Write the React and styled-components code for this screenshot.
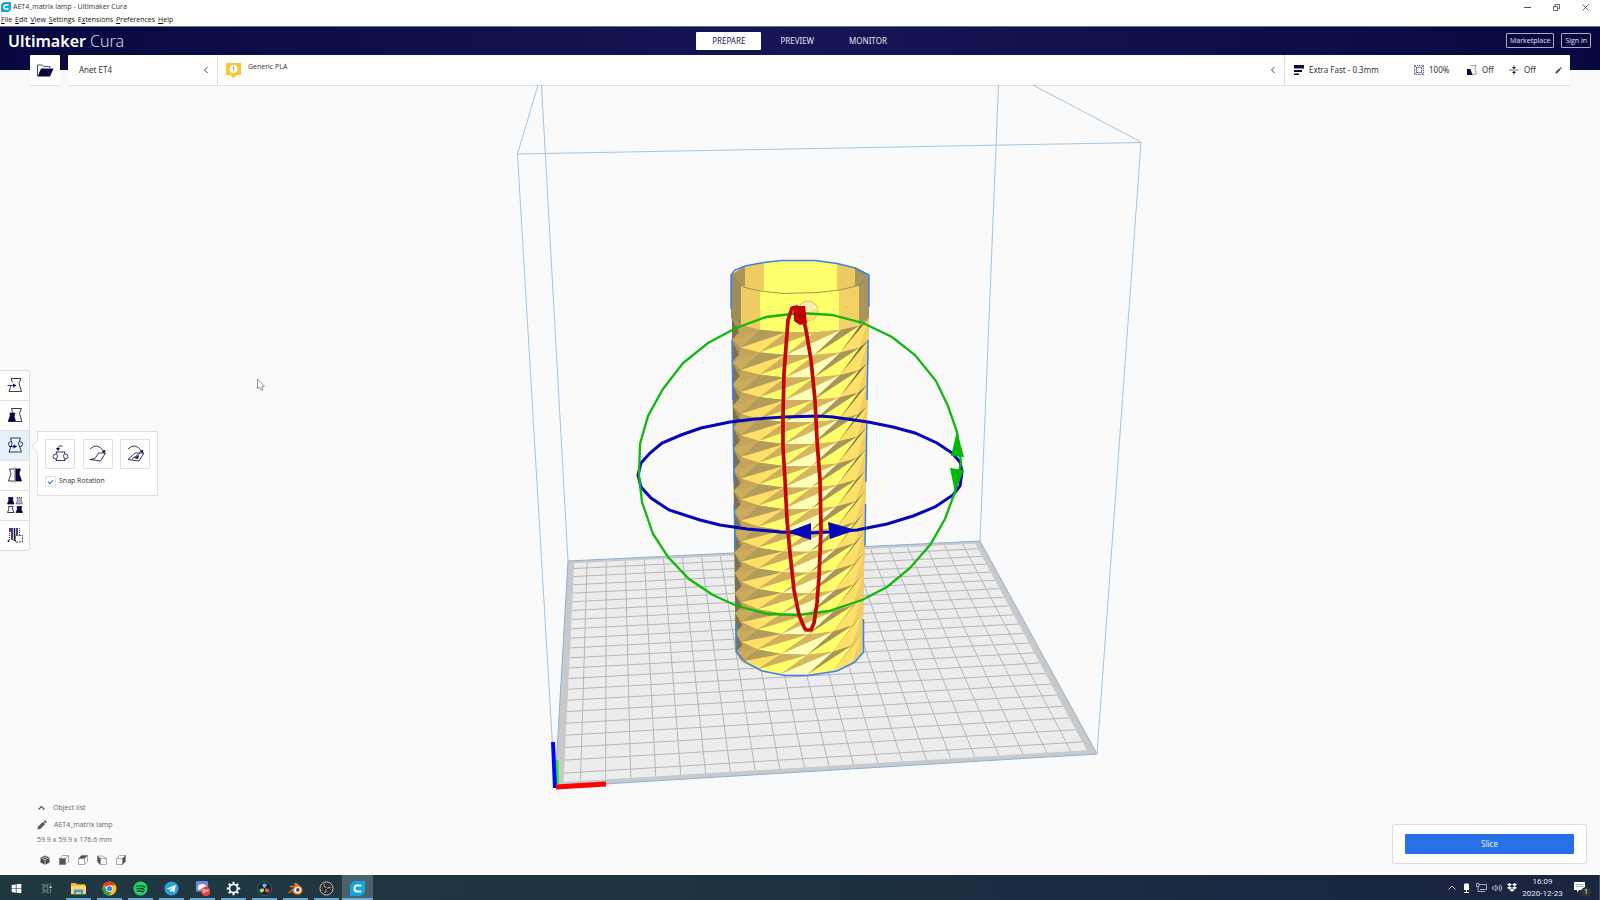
import React from "react";
import styled, { createGlobalStyle, css } from "styled-components";

const Global = createGlobalStyle`
  *, *::before, *::after { box-sizing: border-box; }
  body { margin: 0; background: #fafafa; }
  button, input { font: inherit; color: inherit; }
  button { margin: 0; padding: 0; border: 0; background: none; cursor: pointer; }
  svg { display: block; flex: none; }
`;

const navy = "#08073f";
const labelFont = `"Noto Sans", "Open Sans", sans-serif`;

const Page = styled.div`
  min-height: 100vh;
  display: flex;
  flex-direction: column;
  font-family: "Open Sans", "Noto Sans", sans-serif;
  font-size: 7px;
  line-height: 10px;
  color: #333;
`;

/* ---------- window frame ---------- */
const TitleBar = styled.div`
  height: 14px;
  display: flex;
  align-items: center;
  gap: 2px;
  padding-left: 1px;
  background: #fff;
`;
const WindowButtons = styled.div`
  margin-left: auto;
  display: flex;
`;
const WindowButton = styled.button`
  width: 29px;
  height: 14px;
  display: grid;
  place-items: center;
`;
const MenuBar = styled.nav`
  height: 12px;
  display: flex;
  align-items: center;
  gap: 3px;
  padding-left: 1px;
  background: #fff;
  color: #111;
`;

/* ---------- header ---------- */
const Header = styled.header`
  height: 44px;
  padding: 0 9px 16px 8px;
  display: grid;
  grid-template-columns: 1fr auto 1fr;
  align-items: center;
  background: linear-gradient(90deg, ${navy}, #161655 50%, ${navy});
  border-top: 1px solid #6f6f93;
`;
const Logo = styled.div`
  font-family: ${labelFont};
  font-size: 16px;
  line-height: 20px;
  font-weight: 300;
  color: #d8d8e6;
  b { font-weight: 600; color: #fff; }
`;
const Tabs = styled.nav`
  display: flex;
  gap: 3px;
`;
const Tab = styled.button`
  height: 18px;
  padding: 0 16px;
  border-radius: 1px;
  font-family: ${labelFont};
  font-size: 8px;
  line-height: 18px;
  color: ${(p) => (p.$active ? "#161655" : "#e3e3f0")};
  background: ${(p) => (p.$active ? "#fff" : "transparent")};
`;
const Account = styled.div`
  display: flex;
  justify-content: flex-end;
  gap: 7px;
`;
const OutlineButton = styled.button`
  height: 15px;
  padding: 0 3px;
  border: 1px solid #a9a9c4;
  border-radius: 1px;
  line-height: 13px;
  color: #e3e3f0;
`;

/* ---------- stage bar ---------- */
const Stage = styled.div`
  position: relative;
  z-index: 1;
  display: flex;
  gap: 8px;
  height: 30px;
  margin: -15px 30px 0;
  font-family: ${labelFont};
  font-size: 8px;
`;
const raised = css`
  background: #fff;
  box-shadow: 0 1px 1px #0000001c;
  border-radius: 1px;
`;
const OpenFile = styled.button`
  ${raised}
  width: 30px;
  display: grid;
  place-items: center;
`;
const StageBar = styled.div`
  ${raised}
  flex: 1;
  display: flex;
`;
const Machine = styled.button`
  width: 150px;
  padding: 0 8px 0 11px;
  display: flex;
  align-items: center;
  justify-content: space-between;
  border-right: 1px solid #ddd;
`;
const Material = styled.button`
  flex: 1;
  padding: 0 8px;
  display: flex;
  align-items: center;
  gap: 7px;
  text-align: left;
  > svg:last-child { margin-left: auto; }
`;
const MaterialText = styled.span`
  height: 20px;
  font-family: "Open Sans", sans-serif;
  font-size: 7px;
  line-height: 14px;
`;
const PrintSettings = styled.button`
  width: 286px;
  padding: 0 7px 0 9px;
  display: grid;
  grid-template-columns: 1fr 53px 42px 46px 8px;
  align-items: center;
  border-left: 1px solid #ddd;
`;
const Setting = styled.span`
  display: flex;
  align-items: center;
  gap: 5px;
`;

/* ---------- workspace ---------- */
const Workspace = styled.main`
  position: relative;
  flex: 1;
  display: flex;
  flex-direction: column;
`;
const Viewport = styled.svg`
  position: absolute;
  inset: 0;
  width: 100%;
  height: 100%;
`;
const Middle = styled.div`
  position: relative;
  flex: 1;
  display: flex;
  align-items: center;
  padding-top: 36px;
`;
const Toolbar = styled.div`
  display: flex;
  flex-direction: column;
  background: #fff;
  border: 1px solid #ddd;
  border-left: 0;
  border-radius: 0 3px 3px 0;
`;
const ToolSlot = styled.div`
  position: relative;
  & + & { border-top: 1px solid #e2e2e2; }
`;
const Tool = styled.button`
  width: 29px;
  height: 29px;
  display: grid;
  place-items: center;
  background: ${(p) => (p.$active ? "#e5f0fa" : "transparent")};
`;
const Flyout = styled.div`
  position: absolute;
  left: 37px;
  top: 0;
  width: 121px;
  height: 65px;
  padding: 7px;
  display: flex;
  flex-direction: column;
  gap: 7px;
  background: #fff;
  border: 1px solid #e0e0e0;
  &::before {
    content: "";
    position: absolute;
    left: -5px;
    top: 10px;
    width: 9px;
    height: 9px;
    background: #fff;
    border: solid #e0e0e0;
    border-width: 0 0 1px 1px;
    transform: rotate(45deg);
  }
`;
const FlyoutTools = styled.div`
  display: flex;
  justify-content: space-between;
`;
const FlyoutTool = styled.button`
  width: 30px;
  height: 30px;
  display: grid;
  place-items: center;
  border: 1px solid #e0e0e0;
`;
const CheckLabel = styled.label`
  display: flex;
  align-items: center;
  gap: 3px;
`;
const Check = styled.input`
  appearance: none;
  width: 11px;
  height: 11px;
  margin: 0;
  display: grid;
  place-items: center;
  border: 1px solid #e0e0e0;
  background: #fff;
  &:checked::after {
    content: "";
    width: 5px;
    height: 3px;
    border: solid #2671e7;
    border-width: 0 0 1px 1px;
    transform: rotate(-45deg);
  }
`;
const Bottom = styled.div`
  position: relative;
  display: flex;
  justify-content: space-between;
  align-items: flex-end;
  padding: 0 13px 4px 37px;
`;
const ObjectInfo = styled.section`
  display: flex;
  flex-direction: column;
  color: #666;
`;
const InfoRow = styled.button`
  height: 17px;
  display: flex;
  align-items: center;
  gap: 7px;
`;
const Dimensions = styled.div`
  height: 16px;
  line-height: 14px;
`;
const Views = styled.div`
  height: 22px;
  display: flex;
  align-items: center;
  gap: 9px;
  padding: 0 3px;
`;
const ActionPanel = styled.section`
  width: 195px;
  margin-bottom: 7px;
  padding: 9px 12px;
  background: #fff;
  border: 1px solid #ddd;
  border-radius: 2px;
`;
const SliceButton = styled.button`
  width: 100%;
  height: 20px;
  border-radius: 1px;
  background: #2671e7;
  color: #e8f1fd;
  font-family: ${labelFont};
  font-size: 8px;
`;

/* ---------- taskbar ---------- */
const Taskbar = styled.footer`
  height: 25px;
  padding-left: 1px;
  display: flex;
  color: #e6eaee;
  background: linear-gradient(90deg, #20383f, #1f3640 35%, #1a2741 80%, #1a2540);
`;
const AppButton = styled.button`
  width: 31px;
  height: 25px;
  padding-top: 1px;
  display: grid;
  place-items: center;
  border: solid transparent;
  border-width: 0 3px;
  box-shadow: ${(p) => (p.$running ? "inset 0 -2px #69a9dc" : "none")};
  ${(p) =>
    p.$active &&
    css`
      background: #4c626b;
      border-width: 0;
    `}
`;
const Tray = styled.div`
  margin-left: auto;
  display: flex;
  align-items: center;
`;
const TrayButton = styled.button`
  width: 15px;
  height: 25px;
  display: grid;
  place-items: center;
`;
const Clock = styled.div`
  width: 47px;
  text-align: center;
  font-family: Roboto, sans-serif;
  font-size: 8px;
  line-height: 12px;
`;
const Notifications = styled.button`
  position: relative;
  width: 34px;
  height: 25px;
  padding-left: 8px;
  border-right: 1px solid #46506a;
`;
const Count = styled.span`
  position: absolute;
  left: 15px;
  top: 12px;
  width: 10px;
  height: 10px;
  border-radius: 5px;
  background: #333;
  color: #fff;
  text-align: center;
`;

/* ---------- icons ---------- */
const Svg = ({ s = 16, w = s, h = s, box = `0 0 ${w} ${h}`, children, ...rest }) => (
  <svg width={w} height={h} viewBox={box} fill="none" stroke={navy} aria-hidden="true" {...rest}>
    {children}
  </svg>
);
const ChevronLeft = () => (
  <Svg w={6} h={8} stroke="#444"><path d="M4.500 1 1.500 4l3 3" /></Svg>
);
const CuraMark = ({ s }) => (
  <Svg s={s} box="0 0 16 16" stroke="none">
    <path d="M4 0h12v12l-4 4H0V4z" fill="#12a5df" />
    <path d="M12 4.800H7.500Q4.800 4.800 4.800 8t2.700 3.200H12" stroke="#fff" strokeWidth="2.200" />
  </Svg>
);
const Pencil = ({ s = 8, color = "#555" }) => (
  <Svg s={s} box="0 0 10 10" stroke="none">
    <path d="M.5 9.500 1 6.800 6 1.800 8.200 4 3.200 9zM6.700 1.200 7.500.4Q8 0 8.600.5l.9.9q.5.600 0 1.100l-.8.8z" fill={color} />
  </Svg>
);

const toolIcons = [
  ["Move", <><path d="M4 1.500h10l-2 5 2.500 8H2l2-6M4 1.500l1.500 4" /><path d="M.5 8.500h6" /><path d="M6 6.500 9.500 8.500 6 10.500z" fill={navy} stroke="none" /></>],
  ["Scale", <><path d="M5.500 5.500 4.500 1.500h10l-2 5 2.500 8H9" /><path d="M3 6h5L7 9l1.500 5.500H1.200L3.200 9z" fill={navy} /></>],
  ["Rotate", <><path d="M3.500 1h10l-2 5.500 3 8.500H2l3-8.500z" /><path d="M4 4.500Q1 5 1.500 7.500T4 9.500M13 4.500q3 .5 2.500 3T13 9.500" /><path d="M2.500 9.500h5" /><path d="M6.500 7.500 10 9.500l-3.500 2z" fill={navy} stroke="none" /></>],
  ["Mirror", <><path d="M7 2H2.500L4 6.500 1.500 14H7" /><path d="M8 .5v15" /><path d="M9 2h4.500L12 6.500 14.500 14H9z" fill={navy} /></>],
  ["Per Model Settings", <><path d="M1.500.5h4.500L5.500 3 7 7H.5L2 3z" fill={navy} /><path d="M10 .5h5L14 3l1.500 4H9l1.500-4z" strokeDasharray="1 1" fill="#b5b5c8" /><path d="M1.500 9.500h4.500L5.500 12 7 15.500H.5L2 12z" /><path d="M10 9.500h5L14 12l1.500 3.500H9l1.500-3.500z" fill={navy} /></>],
  ["Support Blocker", <><path d="M3 1v4M1.500 13v2M5 1v12M7.500 1v13M10 1v7" strokeWidth="1.500" /><path d="M2.500 6v7M12.500 1v7" strokeDasharray="1 1" /><path d="M8.500 8.500h7v6.500h-7z" fill="#fff" strokeDasharray="2 1" /></>],
];
const rotateIcons = [
  ["Reset", <><path d="M4 7h9l-1.500 4 1.500 4.500H4L5.500 11z" /><path d="M4 9q-3 0-3 2.500T4 14M13 9q3 0 3 2.500T13 14M10.500 1Q6 0 6 4" /><path d="M4 3h4L6 6z" fill={navy} stroke="none" /></>],
  ["Lay flat", <><path d="M1 14.500 6 13.500 9.500 8h7l-5 8zM1 4Q8-3 14.500 6" /><path d="M12.500 6l4-1-1 3.500z" fill={navy} stroke="none" /></>],
  ["Select face", <><path d="M1 14.500 8 8h9l-5 8zM1 4Q8-3 14.500 6M5 14 13 8" /><path d="M12.500 6l4-1-1 3.500zM7 13l5-3-1 4z" fill={navy} stroke="none" /></>],
];

const cubeFaces = {
  front: "M.5 3.500h6v6h-6z",
  top: "M.5 3.500 3.500.5h6l-3 3z",
  left: "M.5 1l3 2.500v6L.5 7z",
  right: "M6.500 3.500l3-3v6l-3 3z",
};
const ViewIcon = ({ kind }) =>
  kind === "3D" ? (
    <Svg s={10} stroke="none">
      <path d="M5 .5 9.500 2.500v5L5 9.800.5 7.500v-5z" fill="#4b4b4b" />
      <path d="M1 2.800 5 4.600l4-1.800M5 4.600v5M3 1.700l2 .9 2-.9" stroke="#ddd" strokeWidth=".8" />
    </Svg>
  ) : (
    <Svg s={10} stroke="#888" strokeWidth=".7">
      {kind === "left" ? <path d="M.5 1l3 2.500h6v6h-6L.5 7zM.5 1h5l4 2.500" /> : <path d="M.5 3.500h6v6h-6zM.5 3.500l3-3h6l-3 3M9.500.5v6l-3 3" />}
      <path d={cubeFaces[kind]} fill="#555" />
    </Svg>
  );

const gearTeeth = [0, 45, 90, 135];
const apps = [
  ["Start", <g fill="#fff" stroke="none"><path d="M1 3l6-1v5.500H1zM8 1.900 15 1v6.500H8zM1 8.500h6V14l-6-1zM8 8.500h7V15l-7-1z" /></g>],
  ["Task View", <g stroke="#9aa9ae"><path d="M1 1v2h8V1M1 15v-2h8v2M1.500 5.500h7v5h-7zM12.500 1v3M12.500 8v7" /><path d="M11 6h3" stroke="#fff" strokeWidth="2" /></g>],
  ["File Explorer", <g stroke="none"><path d="M0 2h5l1.500 1.500H15V14H0z" fill="#f0b73a" /><path d="M0 5h16v9H0z" fill="#ffd764" /><path d="M3 14V9h10v5h-2.500v-2h-5v2z" fill="#3f9bd8" /></g>],
  ["Chrome", <g stroke="none"><circle cx="8" cy="8" r="7.500" fill="#fbc116" /><path d="M8 8 1.500 4.200A7.500 7.500 0 0 1 14.600 4.500H8z" fill="#e33b2e" /><path d="M8 8 4.700 9.800 1.500 4.300A7.500 7.500 0 0 0 7.600 15.500l3.200-5.600z" fill="#2fa24c" /><circle cx="8" cy="8" r="3.600" fill="#fff" /><circle cx="8" cy="8" r="2.800" fill="#3f80ee" /></g>],
  ["Spotify", <g><circle cx="8" cy="8" r="7.500" fill="#1ed760" stroke="none" /><path d="M3.300 5.600q5-1.400 9.600.9M4 8.300q4.200-1 8 .9M4.600 10.800q3.400-.8 6.400.8" stroke="#12303a" strokeWidth="1.300" strokeLinecap="round" /></g>],
  ["Telegram", <g stroke="none"><circle cx="8" cy="8" r="7.500" fill="#2da0dc" /><path d="M3 8 12.500 4.200 11 12.300 8.300 10.400 6.800 11.800 6.500 9.400 10.500 6 5.300 9z" fill="#fff" /></g>],
  ["Discord", <g stroke="none"><path d="M1 1.500Q1 0 2.500 0h10Q14 0 14 1.500V14l-3-2.500H2.500Q1 11.500 1 10z" fill="#7289da" /><path d="M4 4q3.500-1.500 7 0l1 4.500q-1 1-2.500 1l-.5-.7h-3l-.5.7Q4 9.500 3 8.500z" fill="#fff" /><circle cx="11.500" cy="11" r="5" fill="#e4474b" /><text x="11.500" y="13.300" fontSize="6" textAnchor="middle" fill="#fff" fontFamily="Noto Sans">9+</text></g>],
  ["Settings", <g stroke="#fff"><circle cx="8" cy="8" r="4.300" strokeWidth="1.800" />{gearTeeth.map((a) => <path key={a} d="M8 .8v2.400M8 12.800v2.400" strokeWidth="2.200" transform={`rotate(${a} 8 8)`} />)}</g>],
  ["DaVinci Resolve", <g stroke="none"><circle cx="8" cy="8" r="7.500" fill="#15222b" stroke="#57727d" strokeWidth=".8" /><path d="M8 7.700Q4.600 5 6 3.300q2-1.500 4 0Q11.400 5 8 7.700z" fill="#45c3f3" /><path d="M7.600 8.300Q7.500 13 4.500 12.300q-2.300-1-1.700-3Q4 7.500 7.600 8.300z" fill="#b8e04a" /><path d="M8.400 8.300q3.600-1 4.800 1 .6 2-1.700 3Q8.500 13 8.400 8.300z" fill="#ef5350" /></g>],
  ["Blender", <g stroke="none"><path d="M0 12.500 7 6.700H2V5h6L6.200 3 8.300 1.500l6.200 5.200Q17 10 14 13.200q-4.500 3-8.500-.3Q4.500 11.500 5 10L1.500 13z" fill="#ee7d1a" /><circle cx="10.300" cy="9.500" r="3.500" fill="#fff" /><circle cx="10.500" cy="9.500" r="2" fill="#23558c" /></g>],
  ["OBS", <g><circle cx="8" cy="8" r="7" fill="#262428" stroke="#ccc" /><path d="M8 7Q4.800 6.500 5.800 3.500M9 8.300q1.800-2.600 4-.8M7.300 9q1 3-2 3.600" stroke="#aaa" strokeWidth="1.200" /><circle cx="8" cy="8" r="4.600" stroke="#555" strokeWidth=".7" /></g>],
];

/* ---------- 3D scene ---------- */
/* Maps unit-square coordinates of the build plate onto its perspective quad. */
const plate = [[568, 561], [980, 541], [1097, 754], [555, 787]];
const homography = ([p0, p1, p2, p3]) => {
  const dx1 = p1[0] - p2[0], dx2 = p3[0] - p2[0], dx3 = p0[0] - p1[0] + p2[0] - p3[0];
  const dy1 = p1[1] - p2[1], dy2 = p3[1] - p2[1], dy3 = p0[1] - p1[1] + p2[1] - p3[1];
  const det = dx1 * dy2 - dx2 * dy1;
  const g = (dx3 * dy2 - dx2 * dy3) / det;
  const h = (dx1 * dy3 - dx3 * dy1) / det;
  return (u, v) => {
    const w = g * u + h * v + 1;
    return [
      ((p1[0] - p0[0] + g * p1[0]) * u + (p3[0] - p0[0] + h * p3[0]) * v + p0[0]) / w,
      ((p1[1] - p0[1] + g * p1[1]) * u + (p3[1] - p0[1] + h * p3[1]) * v + p0[1]) / w,
    ];
  };
};
const onPlate = homography(plate);
const pts = (list) => list.map((p) => p.map((n) => n.toFixed(1)).join(",")).join(" ");
const EDGE = 0.015;
const gridLines = [];
for (let i = 1; i < 22; i++) {
  const t = i / 22;
  gridLines.push([onPlate(t, EDGE), onPlate(t, 1 - EDGE)], [onPlate(EDGE, t), onPlate(1 - EDGE, t)]);
}

/* Twisted faceted tube: 16 rows of triangles between 15-sided rings. */
const ROWS = 16;
const ringPoint = (k, i) => {
  const t = k / ROWS;
  const angle = ((-84 + 24 * i - t * 5) * Math.PI) / 180;
  const edge = i <= 0 || i >= 7;
  const radius = 69 - 5 * t;
  const y = 318 + 334 * t * (1.07 - 0.07 * t);
  return [
    800.5 - t + radius * Math.sin(Math.max(-1.5, Math.min(1.5, angle))),
    y + (edge ? 0 : (14.5 + 8.5 * t) * Math.cos(angle)),
  ];
};
const faceLight = ["#ccab5c", "#ffdf66", "#ffff6c", "#ffffb8", "#ffff6c", "#ffe066", "#f0ce64"];
const faceDark = ["#b39b5a", "#d0ae5d", "#d6b65e", "#a8955a", "#7a7250", "#7a7050", "#7a7050"];
const facets = [];
for (let k = 0; k < ROWS; k++) {
  for (let i = -1; i < 7; i++) {
    const a = ringPoint(k + 1, Math.max(0, i));
    const b = ringPoint(k + 1, i + 1);
    const c = ringPoint(k, Math.min(7, i + 2));
    const d = ringPoint(k, Math.min(7, i + 3));
    if (i >= 0) facets.push([[a, b, c], faceLight[i]]);
    facets.push([[b, c, d], i < 0 ? "#c4a45b" : faceDark[i]]);
  }
  const edge = ringPoint(k, 0), low = ringPoint(k + 1, 0), next = ringPoint(k, 1);
  const dent = [edge[0] + 7, (edge[1] + low[1]) / 2 + 3];
  facets.push([[edge, low, dent], "#7b7152"]);
  facets.push([[edge, next, dent], "#a8945a"]);
}
const body = [];
for (let i = 0; i <= 7; i++) body.push(ringPoint(0, i));
for (let i = 7; i >= 0; i--) body.push(ringPoint(ROWS, i));

const greenRing = "800,313 766,317 736,328 708,343 683,363 663,389 648,416 640,444 639,476 642,502 653,534 668,557 689,579 713,595 737,606 768,614 798,615 829,611 862,600 887,587 910,568 930,545 945,519 955,492 961,462 957,432 948,406 936,381 915,355 892,337 863,323 832,315";
const blueRing = "638,475 641,463 650,453 662,443 681,435 701,428 730,422 755,419 784,417 818,416 833,417 868,422 893,427 915,433 937,443 952,453 960,462 962,472 960,486 953,495 935,507 913,516 887,524 857,530 830,532 807,533 780,532 747,529 720,525 700,520 669,510 651,498 641,487";
const redRing = "792,308 788,320 786,347 784,373 783,417 783,447 785,480 787,520 790,553 794,590 799,615 804,627 806,630 811,630 814,623 817,603 819,577 821,530 820,480 817,440 815,400 811,360 806,330 803,317 797,307";

const Scene = () => (
  <Viewport viewBox="0 85 1600 790" preserveAspectRatio="xMidYMid slice" role="img" aria-label="Build volume">
    <polygon points={pts(plate)} fill="#c9c9c9" stroke="#8fb0d3" strokeWidth="1" />
    <polygon
      points={pts([onPlate(EDGE, EDGE), onPlate(1 - EDGE, EDGE), onPlate(1 - EDGE, 1 - EDGE), onPlate(EDGE, 1 - EDGE)])}
      fill="#ececec"
    />
    <g stroke="#b6b6b6">
      {gridLines.map(([a, b], i) => (
        <line key={i} x1={a[0]} y1={a[1]} x2={b[0]} y2={b[1]} />
      ))}
    </g>
    <g stroke="#a3c5e0" fill="none">
      <path d="M538 85 517.500 154 555 787M541.500 85 568 561M998.500 85 980 541M1033 85 1141 142 1097 754M517.500 154 1141 142.500" />
    </g>
    <path d="M557 760 557.500 784" stroke="#16f036" strokeWidth="3" />
    <path d="M553 742 555 788" stroke="#00f" strokeWidth="4" />
    <path d="M556 787 606 784" stroke="#f00" strokeWidth="5" />

    <g stroke="none">
      <polygon points="732,274 745,266 764,262 782,260 815,260 837,263 855,266 868,274 868,318 732,318" fill="#ffff6c" />
      <polygon points="732,274 745,266 745,288 732,280" fill="#a8955a" />
      <polygon points="745,266 764,262 764,291 745,288" fill="#f0cd62" />
      <polygon points="837,263 855,268 855,288 837,291" fill="#eecb62" />
      <polygon points="855,267 868,274 860,286 855,288" fill="#a8955a" />
      <polygon points="731,274 741,285 741,326 731,318" fill="#9f8d57" />
      <polygon points="741,285 760,291 760,330 741,326" fill="#efcd63" />
      <polygon points="760,291 783,293 817,292 839,290 839,330 800,334 760,330" fill="#ffff6a" />
      <polygon points="839,290 859,285 859,325 839,330" fill="#f2d065" />
      <polygon points="859,285 869,274 869,318 859,325" fill="#a8955a" />
      <polygon points={pts(body)} fill="#c9ab5c" />
    </g>
    {facets.map(([p, fill], i) => (
      <polygon key={i} points={pts(p)} fill={fill} />
    ))}
    <path d="M731 274 743 287 760 291 783 293.500 817 292.500 840 290 860 285 868.500 274" fill="none" stroke="#8a7d4c" strokeWidth=".8" />
    <g fill="none" stroke="#3b80ee" strokeWidth="1.500">
      <path d="M731 309V275L735 270 745 266 764 262.500 782 260.500H815L837 263.500 855 268 869 275V307" />
      <path d="M732 340 735 550M868 340 865 546" strokeDasharray="60 22" />
      <path d="M736 624 736.500 652 745 662 762 671 785 675.500H808L837 671 855 662 863.500 652V619" />
    </g>

    <circle cx="808" cy="311" r="10" fill="#ffeeb0" stroke="#b9a14f" strokeWidth=".7" />
    <path d="M798 311Q806 315 818 308L817 315Q812 321 808 321L800 317z" fill="#f6e36c" />
    <polygon points={blueRing} fill="none" stroke="#0404b8" strokeWidth="3" />
    <polygon points="787,532 811,523 811,540" fill="#0808b9" />
    <polygon points="828,522 856,530 830,539" fill="#0808b9" />
    <polygon points={greenRing} fill="none" stroke="#10b810" strokeWidth="2.300" />
    <polygon points="957,431 951,456 964,457" fill="#06b806" />
    <polygon points="950,468 964,470 955,493" fill="#06b806" />
    <polygon points={redRing} fill="none" stroke="#c00808" strokeWidth="3.700" strokeLinejoin="round" />
    <polygon points="793,306 805,306 807,323 800,325 794,321" fill="#c00000" />
    <path d="M257.500 379v10l2-2 2 3.500 1.500-.8-1.600-3 3-.5z" fill="#fff" stroke="#777" strokeWidth=".8" />
  </Viewport>
);

const menus = [["", "F", "ile"], ["", "E", "dit"], ["", "V", "iew"], ["", "S", "ettings"], ["E", "x", "tensions"], ["", "P", "references"], ["", "H", "elp"]];

export default function App() {
  return (
    <Page>
      <Global />
      <TitleBar>
        <CuraMark s={10} />
        <span>AET4_matrix lamp - Ultimaker Cura</span>
        <WindowButtons>
          <WindowButton aria-label="Minimize"><Svg s={7} stroke="#555"><path d="M0 3.500h7" /></Svg></WindowButton>
          <WindowButton aria-label="Restore"><Svg s={7} stroke="#444"><path d="M.5 2.500h4v4h-4zM2 2.500v-2h4.500v4.500h-2" strokeWidth=".8" /></Svg></WindowButton>
          <WindowButton aria-label="Close"><Svg s={7} stroke="#444"><path d="M.5.5l6 6M6.500.5l-6 6" strokeWidth=".8" /></Svg></WindowButton>
        </WindowButtons>
      </TitleBar>
      <MenuBar>
        {menus.map(([pre, key, rest]) => (
          <button key={rest}>{pre}<u>{key}</u>{rest}</button>
        ))}
      </MenuBar>
      <Header>
        <Logo><b>Ultimaker</b> Cura</Logo>
        <Tabs>
          <Tab $active>PREPARE</Tab>
          <Tab>PREVIEW</Tab>
          <Tab>MONITOR</Tab>
        </Tabs>
        <Account>
          <OutlineButton>Marketplace</OutlineButton>
          <OutlineButton>Sign in</OutlineButton>
        </Account>
      </Header>

      <Stage>
        <OpenFile aria-label="Open file">
          <Svg w={18} h={13}>
            <path d="M1.500 12V1h5l1 1.500H14V4" stroke="#4b4b78" />
            <path d="M1.500 12.500 5 4.500h12.500L14 12.500z" fill={navy} stroke="none" />
          </Svg>
        </OpenFile>
        <StageBar>
          <Machine>Anet ET4<ChevronLeft /></Machine>
          <Material>
            <Svg w={15} h={15} stroke="none">
              <path d="M0 0h15v12H11L7.500 15 4 12H0z" fill="#fdc62c" />
              <circle cx="7.500" cy="6" r="4" fill="#fff" />
              <path d="M6.500 4.500 7.700 3.700V8" stroke="#c79a1e" strokeWidth=".9" />
            </Svg>
            <MaterialText>Generic PLA</MaterialText>
            <ChevronLeft />
          </Material>
          <PrintSettings>
            <Setting>
              <Svg s={10} stroke="none"><path d="M0 0h10v3.500H0zM0 5h8v2H0zM0 8.500h5V10H0z" fill={navy} /></Svg>
              Extra Fast - 0.3mm
            </Setting>
            <Setting>
              <Svg s={10} stroke="#4b4b78" strokeWidth=".8">
                <path d="M.5.5h9v9h-9z" strokeDasharray="1.500 .7" />
                <circle cx="5" cy="5" r="3" />
                <path d="M.5.5 3 3M9.500.5 7 3M.5 9.500 3 7M9.500 9.500 7 7" />
              </Svg>
              100%
            </Setting>
            <Setting>
              <Svg s={10}><path d="M3.500.5h5.500L8 4l1.500 5H6" stroke="#7d7d9c" strokeWidth=".8" /><path d="M0 4h3.500L5 8.500 6 10H0z" fill={navy} stroke="none" /></Svg>
              Off
            </Setting>
            <Setting>
              <Svg s={10} stroke="#4b4b78"><path d="M0 5h10M5 0v4M5 6v4" strokeWidth=".8" /><path d="M3 2h4L5 4zM3 8h4L5 6z" fill={navy} stroke="none" /></Svg>
              Off
            </Setting>
            <Pencil s={7} />
          </PrintSettings>
        </StageBar>
      </Stage>

      <Workspace>
        <Scene />
        <Middle>
          <Toolbar>
            {toolIcons.map(([name, icon]) => (
              <ToolSlot key={name}>
                <Tool $active={name === "Rotate"} aria-label={name}>
                  <Svg s={16} strokeWidth=".8">{icon}</Svg>
                </Tool>
                {name === "Rotate" && (
                  <Flyout>
                    <FlyoutTools>
                      {rotateIcons.map(([label, drawing]) => (
                        <FlyoutTool key={label} aria-label={label}>
                          <Svg w={17} h={17} strokeWidth=".8">{drawing}</Svg>
                        </FlyoutTool>
                      ))}
                    </FlyoutTools>
                    <CheckLabel><Check type="checkbox" defaultChecked />Snap Rotation</CheckLabel>
                  </Flyout>
                )}
              </ToolSlot>
            ))}
          </Toolbar>
        </Middle>
        <Bottom>
          <ObjectInfo>
            <InfoRow><Svg w={9} h={6} stroke="#555"><path d="M1.500 4.500l3-3 3 3" strokeWidth="1.200" /></Svg>Object list</InfoRow>
            <InfoRow><Pencil s={10} />AET4_matrix lamp</InfoRow>
            <Dimensions>59.9 x 59.9 x 176.6 mm</Dimensions>
            <Views>
              {["3D", "front", "top", "left", "right"].map((kind) => (
                <button key={kind} aria-label={`${kind} view`}><ViewIcon kind={kind} /></button>
              ))}
            </Views>
          </ObjectInfo>
          <ActionPanel><SliceButton>Slice</SliceButton></ActionPanel>
        </Bottom>
      </Workspace>

      <Taskbar>
        {apps.map(([name, icon], i) => (
          <AppButton key={name} $running={i > 1} aria-label={name}>
            <Svg s={i < 2 ? 11 : 15} box="0 0 16 16">{icon}</Svg>
          </AppButton>
        ))}
        <AppButton $active $running aria-label="Cura"><CuraMark s={15} /></AppButton>
        <Tray>
          <TrayButton aria-label="Show hidden icons"><Svg w={8} h={5} stroke="#ccc"><path d="M.5 4.500 4 1l3.500 3.500" /></Svg></TrayButton>
          <TrayButton aria-label="Microphone"><Svg w={7} h={10} stroke="none"><path d="M1 1Q3.500-.5 6 1v6H1zM3 7h1v2h2v1H1V9h2z" fill="#fff" /></Svg></TrayButton>
          <TrayButton aria-label="Network"><Svg w={11} h={9} stroke="#ccc" strokeWidth=".8"><path d="M3 1.500h7.500v5H4M6 8.500h3M.5.5h2.500v3H.5zM2 3.500v5h4" /></Svg></TrayButton>
          <TrayButton aria-label="Volume"><Svg w={10} h={8} stroke="#ccc" strokeWidth=".8"><path d="M.5 3h1.500l2-2v6l-2-2H.5zM5.500 2.500q1 1.500 0 3M7 1.500q2 2.500 0 5M8.500.5q2.500 3.500 0 7" /></Svg></TrayButton>
          <TrayButton aria-label="Dropbox"><Svg w={10} h={9} stroke="none"><path d="M2.500 0 5 1.600 2.500 3.200 0 1.600zM7.500 0 10 1.600 7.500 3.200 5 1.600zM2.500 3.200 5 4.800 2.500 6.400 0 4.800zM7.500 3.200 10 4.800 7.500 6.400 5 4.800zM5 5.600l2.500 1.600L5 8.800 2.500 7.200z" fill="#fff" /></Svg></TrayButton>
          <Clock>16:09<br />2020-12-23</Clock>
          <Notifications aria-label="Notifications">
            <Svg w={11} h={11} stroke="none"><path d="M0 0h11v8H5L3 10.500V8H0z" fill="#fff" /><path d="M2 2.500h7M2 4.500h7" stroke="#8a93a5" strokeWidth=".8" /></Svg>
            <Count>1</Count>
          </Notifications>
        </Tray>
      </Taskbar>
    </Page>
  );
}
